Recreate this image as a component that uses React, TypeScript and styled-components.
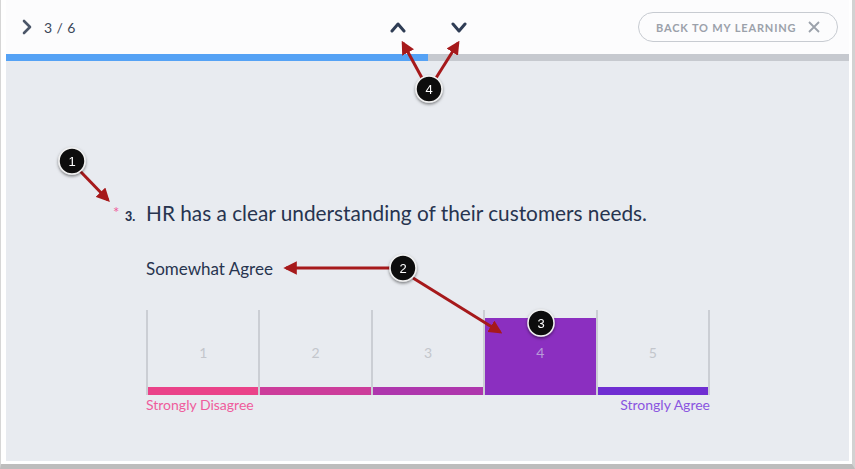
import React from "react"
import styled, { createGlobalStyle } from "styled-components"

const GlobalStyle = createGlobalStyle`
	html, body {
		margin: 0;
		padding: 0;
		background: #ffffff;
	}
	body {
		font-family: Lato, "Open Sans", sans-serif;
		color: #27344f;
	}
`

const Frame = styled.div`
	position: relative;
	width: 855px;
	height: 469px;
	box-sizing: border-box;
	background: #ffffff;
	border-left: 1px solid #d6d6d6;
	border-right: 3px solid #d2d2d2;
	border-bottom: 5px solid #bdbdbd;
	padding: 0 3px 3px 5px;
`

const Window = styled.div`
	display: flex;
	flex-direction: column;
	height: 100%;
`

const Header = styled.header`
	display: grid;
	grid-template-columns: 1fr auto 1fr;
	align-items: center;
	height: 54px;
	background: #fcfcfd;
	padding: 0 11px 0 13px;
`

const Counter = styled.div`
	display: flex;
	align-items: center;
	gap: 9px;
	font-size: 14px;
	color: #3b4759;
	letter-spacing: 0.4px;
`

const Arrows = styled.div`
	display: flex;
	align-items: center;
	gap: 45px;
`

const IconButton = styled.button`
	display: flex;
	align-items: center;
	justify-content: center;
	width: 16px;
	height: 16px;
	padding: 0;
	border: 0;
	background: none;
`

const BackButton = styled.button`
	justify-self: end;
	display: flex;
	align-items: center;
	justify-content: space-between;
	height: 30px;
	width: 200px;
	box-sizing: border-box;
	padding: 0 17px 0 17px;
	border: 1px solid #c7cbd1;
	border-radius: 15px;
	background: #fcfcfd;
	font-family: Lato, "Open Sans", sans-serif;
	font-size: 11px;
	font-weight: 700;
	letter-spacing: 0.85px;
	white-space: nowrap;
	color: #9ba1aa;
`

const Progress = styled.div`
	height: 7px;
	background: #c6c9cf;
`

const ProgressFill = styled.div`
	height: 100%;
	background: #55a2f5;
`

const Content = styled.main`
	flex: 1;
	background: #e8ebf0;
	padding: 140px 0 0 140px;
	box-sizing: border-box;
`

const QuestionRow = styled.div`
	display: flex;
	align-items: baseline;
	margin-left: -33px;
`

const Required = styled.span`
	width: 12px;
	font-size: 15px;
	color: #ef5a9a;
	position: relative;
	top: -3px;
`

const Number = styled.span`
	width: 21px;
	font-size: 12.5px;
	font-weight: 900;
	color: #27344f;
`

const QuestionText = styled.h2`
	margin: 0;
	font-size: 20.8px;
	font-weight: 400;
	line-height: 24px;
	color: #27344f;
`

const AnswerLabel = styled.div`
	margin-top: 34px;
	font-size: 17px;
	line-height: 20px;
	color: #27344f;
`

const Scale = styled.div`
	margin-top: 31px;
	width: 564px;
	display: grid;
	grid-template-columns: repeat(5, 1fr);
	height: 85px;
	border-right: 2px solid #cbced4;
	box-sizing: border-box;
`

const Cell = styled.div`
	display: flex;
	flex-direction: column;
	padding-top: 8px;
	border-left: 2px solid #cbced4;
`

const Block = styled.div<{ $fill: string; $selected: boolean }>`
	flex: 1;
	display: flex;
	flex-direction: column;
	background: ${(p) => (p.$selected ? p.$fill : "transparent")};
`

const Value = styled.div<{ $selected: boolean }>`
	flex: 1;
	display: flex;
	align-items: center;
	justify-content: center;
	font-size: 14px;
	color: ${(p) => (p.$selected ? "#b89bd8" : "#c3c6cc")};
`

const Bar = styled.div<{ $fill: string }>`
	height: 8px;
	background: ${(p) => p.$fill};
`

const Ends = styled.div`
	width: 564px;
	display: flex;
	justify-content: space-between;
	margin-top: 1px;
	font-size: 14px;
	line-height: 18px;
`

const EndLabel = styled.span<{ $color: string }>`
	color: ${(p) => p.$color};
`

const Overlay = styled.svg`
	position: absolute;
	left: 0;
	top: 0;
	pointer-events: none;
`

const Chevron = ({ dir }: { dir: "up" | "down" | "right" }) => {
	const pts = {
		up: "2,12 8,5 14,12",
		down: "2,5 8,12 14,5",
		right: "5,2 11,8 5,14",
	}[dir]
	return (
		<svg width="16" height="16" viewBox="0 0 16 16">
			<polyline
				points={pts}
				fill="none"
				stroke={dir === "right" ? "#4b5668" : "#2f3d55"}
				strokeWidth={dir === "right" ? 2.6 : 3}
				strokeLinecap="round"
				strokeLinejoin="round"
			/>
		</svg>
	)
}

const options = [
	{ value: 1, color: "#ea4289" },
	{ value: 2, color: "#cc3d9b" },
	{ value: 3, color: "#ae36ad" },
	{ value: 4, color: "#8b2fc0" },
	{ value: 5, color: "#6f2ed2" },
]

const selected = 4

const callouts = [
	{ n: 1, x: 71, y: 161 },
	{ n: 2, x: 402, y: 268 },
	{ n: 3, x: 540, y: 323 },
	{ n: 4, x: 428, y: 89 },
]

const arrows = [
	{ x1: 79, y1: 171, x2: 107, y2: 200 },
	{ x1: 389, y1: 268, x2: 285, y2: 268 },
	{ x1: 412, y1: 278, x2: 499, y2: 332 },
	{ x1: 421, y1: 78, x2: 402, y2: 43 },
	{ x1: 435, y1: 78, x2: 457, y2: 43 },
]

function Annotations() {
	return (
		<Overlay width="855" height="469" viewBox="0 0 855 469">
			<defs>
				<marker
					id="head"
					viewBox="0 0 10 10"
					refX="8"
					refY="5"
					markerWidth="4.5"
					markerHeight="4.5"
					orient="auto"
				>
					<path d="M0,0 L10,5 L0,10 z" fill="#a6191b" />
				</marker>
				<filter id="shadow" x="-50%" y="-50%" width="200%" height="200%">
					<feDropShadow dx="0" dy="1.5" stdDeviation="1.5" floodColor="#000" floodOpacity="0.5" />
				</filter>
			</defs>
			{arrows.map((a, i) => (
				<line
					key={i}
					{...a}
					stroke="#a6191b"
					strokeWidth="3"
					markerEnd="url(#head)"
				/>
			))}
			{callouts.map((c) => (
				<g key={c.n} filter="url(#shadow)">
					<circle cx={c.x} cy={c.y} r="13" fill="#0d0d0d" stroke="#f2f2f2" strokeWidth="1.5" />
					<text
						x={c.x}
						y={c.y + 4.5}
						textAnchor="middle"
						fontFamily="'Liberation Sans', Arial, sans-serif"
						fontSize="13"
						fill="#ffffff"
					>
						{c.n}
					</text>
				</g>
			))}
		</Overlay>
	)
}

export default function App() {
	return (
		<>
			<GlobalStyle />
			<Frame>
				<Window>
					<Header>
						<Counter>
							<Chevron dir="right" />
							<span>3 / 6</span>
						</Counter>
						<Arrows>
							<IconButton aria-label="Previous">
								<Chevron dir="up" />
							</IconButton>
							<IconButton aria-label="Next">
								<Chevron dir="down" />
							</IconButton>
						</Arrows>
						<BackButton>
							<span>BACK TO MY LEARNING</span>
							<svg width="12" height="12" viewBox="0 0 12 12">
								<path d="M1 1 L11 11 M11 1 L1 11" stroke="#9ba1aa" strokeWidth="1.8" />
							</svg>
						</BackButton>
					</Header>
					<Progress>
						<ProgressFill style={{ width: `${(3 / 6) * 100}%` }} />
					</Progress>
					<Content>
						<QuestionRow>
							<Required>*</Required>
							<Number>3.</Number>
							<QuestionText>HR has a clear understanding of their customers needs.</QuestionText>
						</QuestionRow>
						<AnswerLabel>Somewhat Agree</AnswerLabel>
						<Scale>
							{options.map((o) => (
								<Cell key={o.value}>
									<Block $fill={o.color} $selected={o.value === selected}>
										<Value $selected={o.value === selected}>{o.value}</Value>
										<Bar $fill={o.color} />
									</Block>
								</Cell>
							))}
						</Scale>
						<Ends>
							<EndLabel $color="#ef5c9c">Strongly Disagree</EndLabel>
							<EndLabel $color="#8a55e0">Strongly Agree</EndLabel>
						</Ends>
					</Content>
				</Window>
				<Annotations />
			</Frame>
		</>
	)
}
